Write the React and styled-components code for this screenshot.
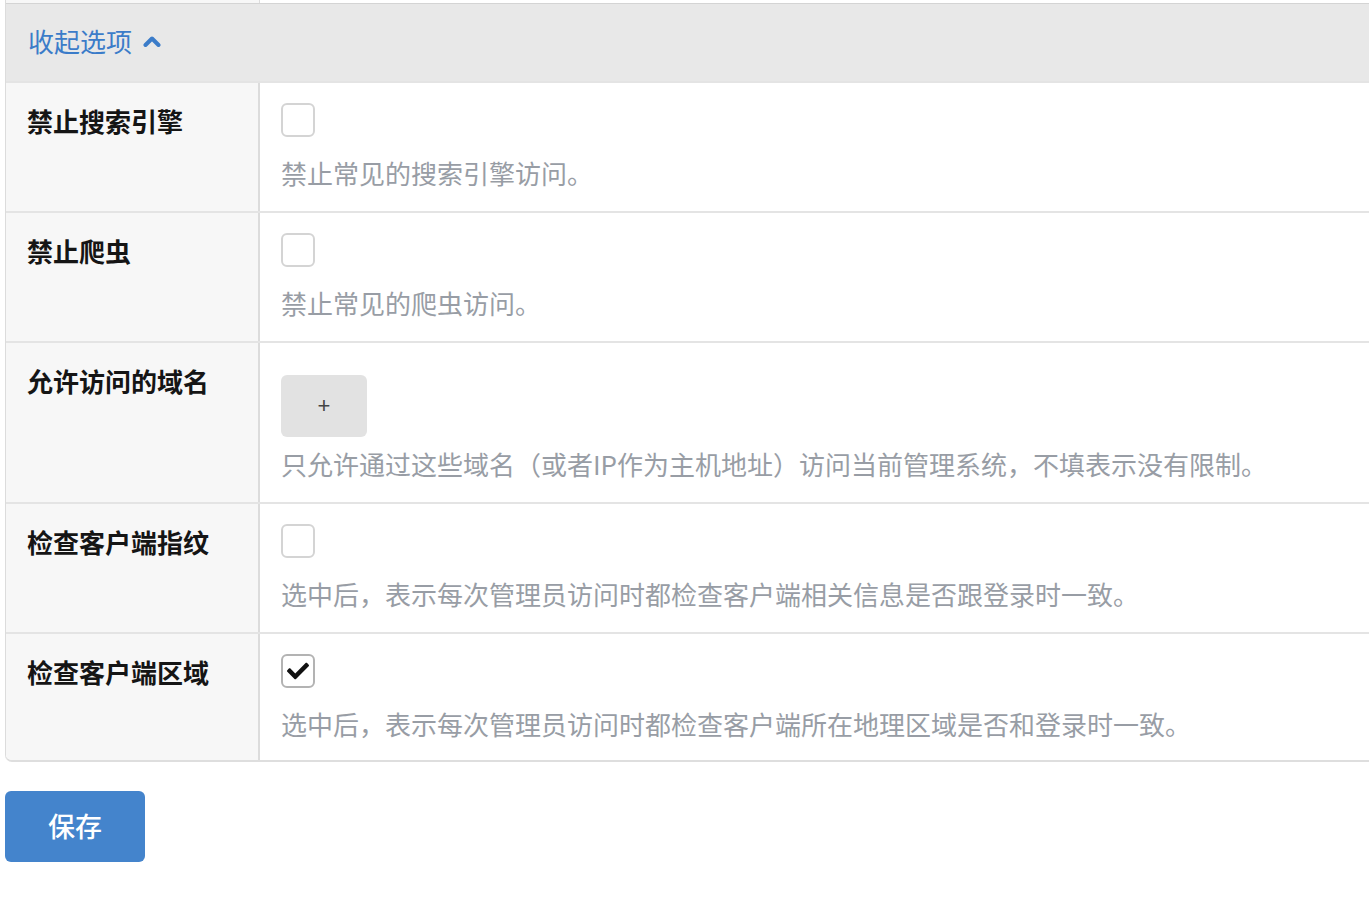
import React, { useState } from "react";
import styled, { createGlobalStyle } from "styled-components";

const GlobalStyle = createGlobalStyle`
    html, body {
        margin: 0;
        padding: 0;
        background: #ffffff;
        overflow: hidden;
    }
    body {
        font-family: "Noto Sans CJK SC", "Noto Sans", sans-serif;
        font-size: 26px;
    }
`;

const Page = styled.div`
    padding-left: 5px;
`;

const Table = styled.div`
    width: calc(100% + 20px);
    border-left: 1px solid #dcdcdc;
    border-bottom: 2px solid #dedede;
    border-bottom-left-radius: 7px;
    overflow: hidden;
`;

const StubRow = styled.div`
    display: grid;
    grid-template-columns: 254px 1fr;
    height: 3px;
    border-bottom: 1px solid #d4d4d4;
`;

const StubCell = styled.div`
    background: ${props => props.$label ? "#f7f7f7" : "#ffffff"};
    border-right: ${props => props.$label ? "1px solid #dcdcdc" : "none"};
`;

const ToggleBar = styled.div`
    height: 77px;
    box-sizing: border-box;
    padding: 0 0 3px 22px;
    background: #e8e8e8;
    display: flex;
    align-items: center;
    color: #3b7cc9;
    line-height: 1;
    gap: 11px;
    cursor: pointer;
`;

const Row = styled.div`
    display: grid;
    grid-template-columns: 254px 1fr;
    border-top: 2px solid #e4e4e4;
`;

const LabelCell = styled.div`
    background: #f7f7f7;
    border-right: 2px solid #dcdcdc;
    padding: 18px 21px;
    font-weight: bold;
    color: #151515;
    line-height: 39px;
`;

const ValueCell = styled.div`
    padding: 20px 21px ${props => props.$last ? "16px" : "18px"};
    display: flex;
    flex-direction: column;
    align-items: flex-start;
`;

const CheckBox = styled.div`
    width: 34px;
    height: 34px;
    box-sizing: border-box;
    border: 2px solid ${props => props.$checked ? "#b3b3b3" : "#d4d4d4"};
    border-radius: 6px;
    display: flex;
    align-items: center;
    justify-content: center;
    margin-bottom: 16px;
    cursor: pointer;
`;

const Help = styled.div`
    color: #989da5;
    line-height: 39px;
    padding-bottom: 1px;
`;

const AddButton = styled.button`
    width: 86px;
    height: 62px;
    border: none;
    border-radius: 6px;
    background: #e2e2e2;
    color: #444;
    font-family: "Liberation Sans", sans-serif;
    font-size: 22px;
    margin: 12px 0 7px;
    cursor: pointer;
`;

const SaveButton = styled.button`
    margin-top: 29px;
    width: 140px;
    height: 71px;
    border: none;
    border-radius: 6px;
    background: #4484cc;
    color: #ffffff;
    font-family: "Noto Sans CJK SC", sans-serif;
    font-size: 27px;
    font-weight: 500;
    padding-bottom: 3px;
    cursor: pointer;
`;

const ChevronUp = () => (
    <svg width="18" height="12" viewBox="0 0 18 12">
        <polyline points="2.5,10 9,3.5 15.5,10" fill="none" stroke="#3b7cc9" strokeWidth="4" strokeLinejoin="round" strokeLinecap="round" />
    </svg>
);

const CheckMark = () => (
    <svg width="22" height="22" viewBox="0 0 512 512">
        <path fill="#111" d="M173.898 439.404l-166.4-166.4c-9.997-9.997-9.997-26.206 0-36.204l36.203-36.204c9.997-9.998 26.207-9.998 36.204 0L192 312.69 432.095 72.596c9.997-9.997 26.207-9.997 36.204 0l36.203 36.204c9.997 9.997 9.997 26.206 0 36.204l-294.4 294.401c-9.998 9.997-26.207 9.997-36.204-.001z" />
    </svg>
);

const options = [
    { key: "search", label: "禁止搜索引擎", help: "禁止常见的搜索引擎访问。", checked: false },
    { key: "spider", label: "禁止爬虫", help: "禁止常见的爬虫访问。", checked: false },
    { key: "domains", label: "允许访问的域名", help: "只允许通过这些域名（或者IP作为主机地址）访问当前管理系统，不填表示没有限制。", list: true },
    { key: "fingerprint", label: "检查客户端指纹", help: "选中后，表示每次管理员访问时都检查客户端相关信息是否跟登录时一致。", checked: false },
    { key: "region", label: "检查客户端区域", help: "选中后，表示每次管理员访问时都检查客户端所在地理区域是否和登录时一致。", checked: true },
];

const App = () => {
    const [values, setValues] = useState(
        Object.fromEntries(options.map(o => [o.key, !!o.checked]))
    );

    const toggle = (key) => {
        setValues({ ...values, [key]: !values[key] });
    };

    return (
        <Page>
            <GlobalStyle />
            <Table>
                <StubRow>
                    <StubCell $label />
                    <StubCell />
                </StubRow>
                <ToggleBar>
                    收起选项 <ChevronUp />
                </ToggleBar>
                {options.map((opt, i) => (
                    <Row key={opt.key}>
                        <LabelCell>{opt.label}</LabelCell>
                        <ValueCell $last={i === options.length - 1}>
                            {opt.list ? (
                                <AddButton>+</AddButton>
                            ) : (
                                <CheckBox $checked={values[opt.key]} onClick={() => toggle(opt.key)}>
                                    {values[opt.key] && <CheckMark />}
                                </CheckBox>
                            )}
                            <Help>{opt.help}</Help>
                        </ValueCell>
                    </Row>
                ))}
            </Table>
            <SaveButton>保存</SaveButton>
        </Page>
    );
};

export default App;
